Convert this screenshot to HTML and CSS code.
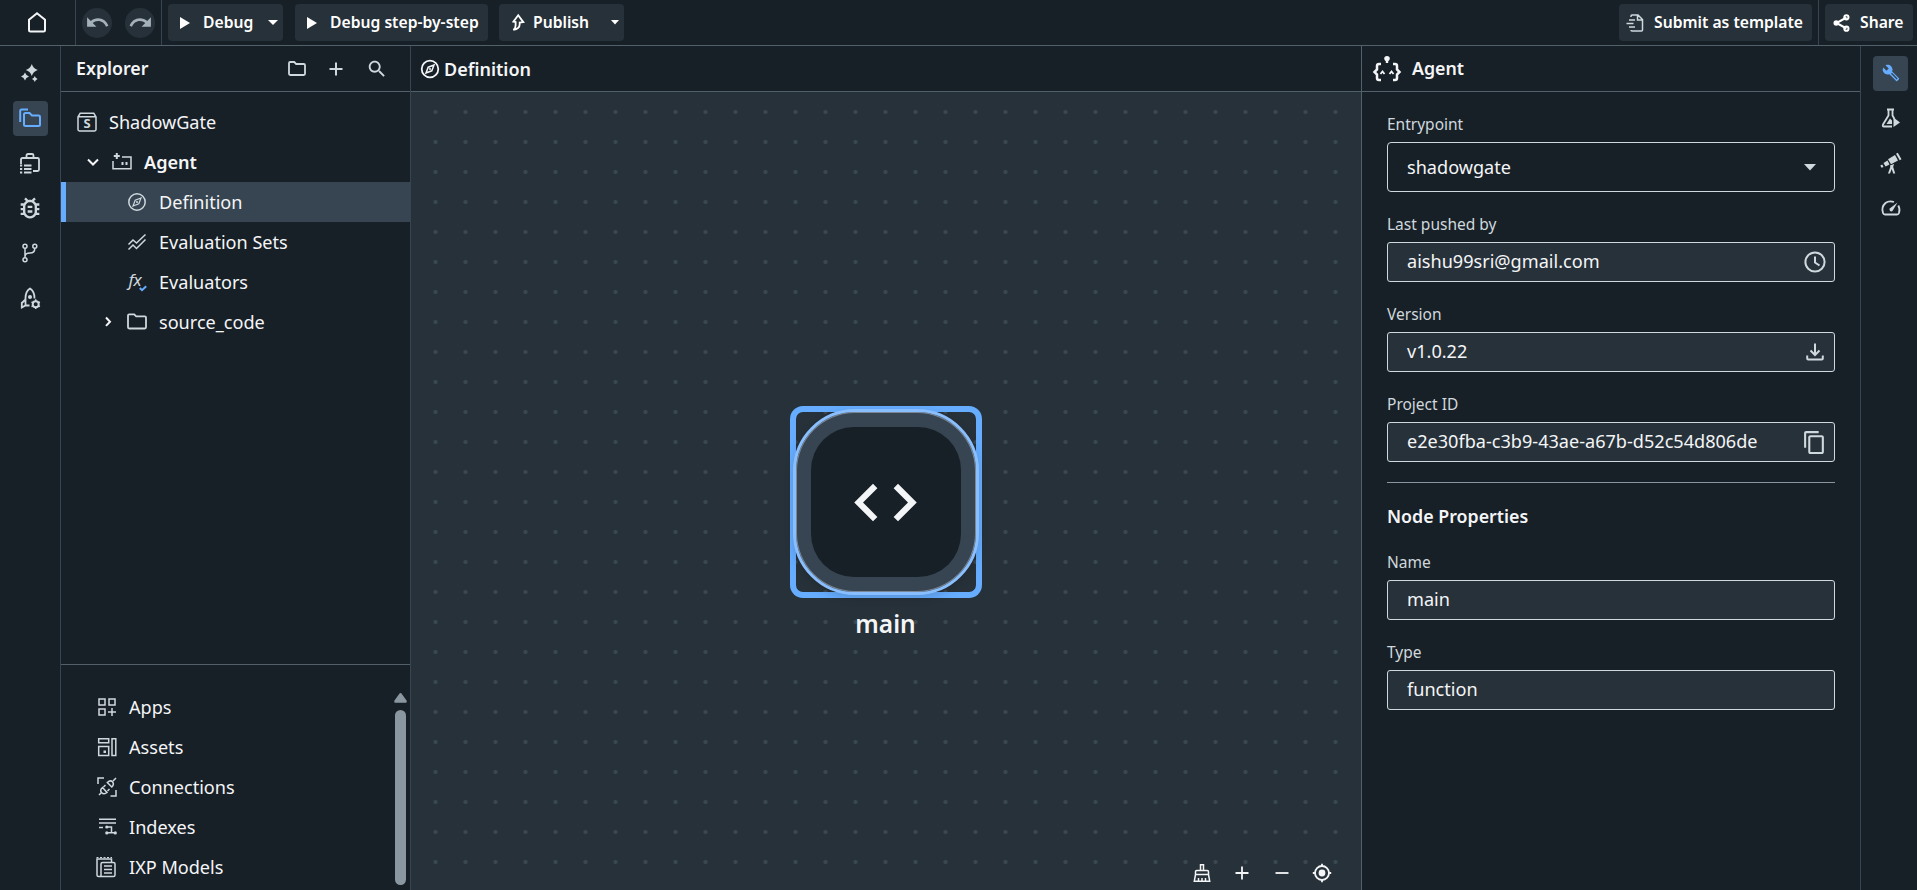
FILE: index.html
```html
<!DOCTYPE html>
<html lang="en">
<head>
    <meta charset="UTF-8">
    <meta name="viewport" content="width=device-width, initial-scale=1.0">
    <title>ShadowGate - Definition</title>
    <link rel="stylesheet" href="styles.css">
</head>
<body>
    <header class="topbar">
        <div class="home">
            <svg width="18" height="21" viewBox="0 0 18 21"><path d="M1 7.8 9 1.2l8 6.6v10.4q0 1.4-1.4 1.4H2.4Q1 19.6 1 18.2z" class="line w2"/></svg>
        </div>
        <div class="history">
            <button class="round"><svg width="25" height="25" viewBox="0 0 24 24"><path d="M12.5 8c-2.65 0-5.05.99-6.9 2.6L2 7v9h9l-3.62-3.62c1.39-1.16 3.16-1.88 5.12-1.88 3.54 0 6.55 2.31 7.6 5.5l2.37-.78C21.08 11.03 17.15 8 12.5 8z"/></svg></button>
            <button class="round"><svg width="25" height="25" viewBox="0 0 24 24"><path d="M18.4 10.6C16.55 8.99 14.15 8 11.5 8c-4.65 0-8.58 3.03-9.96 7.22L3.9 16c1.05-3.19 4.05-5.5 7.6-5.5 1.95 0 3.73.72 5.12 1.88L13 16h9V7l-3.6 3.6z"/></svg></button>
        </div>
        <div class="actions">
            <button class="btn debug">
                <svg width="10" height="12" viewBox="0 0 10 12"><path d="M0 0l10 6-10 6z"/></svg>
                <span>Debug</span>
                <svg class="caret" width="10" height="5" viewBox="0 0 10 5"><path d="M0 0h10L5 5z"/></svg>
            </button>
            <button class="btn step">
                <svg width="10" height="12" viewBox="0 0 10 12"><path d="M0 0l10 6-10 6z"/></svg>
                <span>Debug step-by-step</span>
            </button>
            <button class="btn publish">
                <svg width="13" height="17" viewBox="0 0 13 17"><path d="M6.2 1.3 1.4 7.6l2.2.4v3.4c0 2-.8 3.4-2.2 4.4 4-.5 6.3-2.3 6.3-5.8V8.500l3.600-.4z" class="line w18"/></svg>
                <span>Publish</span>
                <svg class="caret" width="8" height="5" viewBox="0 0 8 5"><path d="M0 0h8L4 4.500z"/></svg>
            </button>
        </div>
        <div class="submit-box">
            <button class="btn submit">
                <svg class="soft" width="18" height="18" viewBox="0 0 18 18"><path d="M5 3V2q0-1 1-1h6l4.500 4.500V16q0 1-1 1H6q-1 0-1-1M11.500 1.500V6H16M3 6h6M0.500 9.500h7M3 13h6" class="line w15"/></svg>
                <span>Submit as template</span>
            </button>
        </div>
        <div class="share-box">
            <button class="btn share">
                <svg width="17" height="18" viewBox="0 0 17 18"><path d="M13.500 3.500 3.500 9l10 5.500" class="line w2"/><circle cx="3.200" cy="9" r="2.700"/><circle cx="13.400" cy="3.300" r="2.100" class="line w2"/><circle cx="13.400" cy="14.700" r="2.100" class="line w2"/></svg>
                <span>Share</span>
            </button>
        </div>
    </header>

    <div class="workspace">
        <nav class="rail left-rail">
            <div class="rail-item"><svg width="20" height="20" viewBox="0 0 20 20"><path d="M11.800 1q1.300 4.300 6 6-4.700 1.700-6 6-1.300-4.300-6-6 4.700-1.700 6-6zM5 9.500q.8 2.800 4 4-3.200 1.200-4 4-.8-2.800-4-4 3.200-1.200 4-4zM14.800 13q.5 2 2.800 3-2.300 1-2.800 3-.5-2-2.800-3 2.300-1 2.800-3z"/></svg></div>
            <div class="rail-item active"><svg width="22" height="20" viewBox="0 0 22 20"><path d="M1.200 14V3q0-1.500 1.500-1.500H9M5 6.500Q5 5 6.500 5h4l2.500 2.500h6.500Q21 7.500 21 9v7.500q0 1.500-1.500 1.500h-13Q5 18 5 16.500z" class="line w2"/></svg></div>
            <div class="rail-item"><svg width="22" height="22" viewBox="0 0 22 22"><path d="M2 12V7.500Q2 6 3.500 6h15Q20 6 20 7.500v10q0 1.500-1.500 1.500H14M7.500 6V3.500Q7.500 2 9 2h4q1.500 0 1.500 1.500V6" class="line w18"/><path d="M1 13.500h2.200M5 13.500h7.500M1 17h2.200M5 17h7.500M1 20.500h2.200M5 20.500h7.500" class="line w18"/></svg></div>
            <div class="rail-item"><svg width="28" height="28" viewBox="0 0 24 24"><path d="M20 8h-2.810c-.45-.78-1.070-1.450-1.820-1.960L17 4.410 15.590 3l-2.170 2.170C12.960 5.060 12.490 5 12 5s-.96.06-1.410.17L8.410 3 7 4.410l1.620 1.630C7.880 6.550 7.260 7.220 6.810 8H4v2h2.090c-.05.33-.09.66-.09 1v1H4v2h2v1c0 .34.04.67.09 1H4v2h2.810c1.040 1.790 2.970 3 5.190 3s4.150-1.210 5.190-3H20v-2h-2.090c.05-.33.09-.66.09-1v-1h2v-2h-2v-1c0-.34-.04-.67-.09-1H20V8zm-4 4v3c0 .22-.03.47-.07.7l-.1.65-.37.65c-.72 1.240-2.040 2-3.460 2s-2.740-.77-3.460-2l-.37-.64-.1-.65C8.030 15.480 8 15.230 8 15v-4c0-.23.03-.48.07-.7l.1-.65.37-.65c.3-.52.72-.97 1.210-1.310l.57-.39.74-.18c.31-.08.63-.12.94-.12.32 0 .63.04.95.12l.68.16.61.42c.5.34.91.78 1.210 1.310l.38.65.1.65c.04.22.07.47.07.69v1zm-6 2h4v2h-4zm0-4h4v2h-4z"/></svg></div>
            <div class="rail-item"><svg width="16" height="20" viewBox="0 0 16 20"><circle cx="3" cy="3.200" r="2" class="line w15"/><circle cx="12.800" cy="3.200" r="2" class="line w15"/><circle cx="3" cy="16.800" r="2" class="line w15"/><path d="M3 5.200v9.600M12.800 5.200q0 4.800-4.800 4.800-5 0-5 3.500" class="line w15"/></svg></div>
            <div class="rail-item"><svg width="20" height="22" viewBox="0 0 20 22"><path d="M5.500 18.500V11Q5.500 4.500 10 1.500q4.500 3 4.500 9.500v.5M5.500 12.500 1.800 16v4.500l3.700-2h4" class="line w18"/><circle cx="10" cy="10" r="2"/><circle cx="15.700" cy="17.200" r="3" class="line w2"/><path d="M15.700 12.300v2M15.700 20v2M11.500 14.800l1.700 1M18.200 18.600l1.700 1M11.500 19.600l1.700-1M18.200 15.800l1.700-1" class="line w15"/></svg></div>
        </nav>

        <aside class="explorer">
            <div class="pane-head">
                <h2>Explorer</h2>
                <svg width="18" height="15" viewBox="0 0 18 15"><path d="M1 2.200Q1 1 2.200 1h4l2 2h7.600Q17 3 17 4.200v8.600q0 1.200-1.200 1.200H2.200Q1 14 1 12.800z" class="line w18"/></svg>
                <svg width="14" height="14" viewBox="0 0 14 14"><path d="M7 .5v13M.5 7h13" class="line w2"/></svg>
                <svg width="22" height="22" viewBox="0 0 24 24"><path d="M15.500 14h-.79l-.28-.27C15.410 12.590 16 11.110 16 9.500 16 5.910 13.090 3 9.500 3S3 5.910 3 9.500 5.910 16 9.500 16c1.610 0 3.090-.59 4.230-1.570l.27.28v.79l5 4.990L20.490 19l-4.990-5zm-6 0C7.010 14 5 11.990 5 9.500S7.010 5 9.500 5 14 7.010 14 9.500 11.990 14 9.500 14z"/></svg>
            </div>

            <ul class="tree">
                <li class="level-0">
                    <svg class="ico" viewBox="0 0 20 20"><path d="M1 5 3.200 1.200h13.600L19 5v12.600Q19 19 17.600 19H2.400Q1 19 1 17.600zM1 4.800h18" class="line w15"/><text x="10" y="16.300" class="ico-s">S</text></svg>
                    <span>ShadowGate</span>
                </li>
                <li class="level-1 bold">
                    <svg class="chevron" viewBox="0 0 20 20"><path d="M5 7.500l5 5 5-5" class="line w2"/></svg>
                    <svg class="ico" viewBox="0 0 20 20"><path d="M1 9v7.800h18V5h-9" class="line w15"/><path d="M4.800 1v6M1.800 4h6M10.500 10v3M14.500 10v3" class="line w2"/></svg>
                    <span>Agent</span>
                </li>
                <li class="level-2 selected">
                    <svg class="ico" viewBox="0 0 20 20"><circle cx="10" cy="10" r="8.200" class="line w15"/><path d="M14 6 11.800 11.800 6 14 8.200 8.200z" class="line w12"/><circle cx="10" cy="10" r="1"/></svg>
                    <span>Definition</span>
                </li>
                <li class="level-2">
                    <svg class="ico" viewBox="0 0 20 20"><path d="M1.500 12.500 6 8l3.500 3 9-8.500M1.500 17.500 6 13l3.500 3.500 9-9" class="line w15"/></svg>
                    <span>Evaluation Sets</span>
                </li>
                <li class="level-2">
                    <svg class="ico" viewBox="0 0 20 20"><text x="1.500" y="13.500" class="ico-fx">fx</text><path d="M12.800 16l2.200 2.200 4.200-4" class="line w2 accent"/></svg>
                    <span>Evaluators</span>
                </li>
                <li class="level-2 branch">
                    <svg class="chevron" viewBox="0 0 20 20"><path d="M8 5.500l4 4.200-4 4.200" class="line w2"/></svg>
                    <svg class="ico" viewBox="0 0 20 20"><path d="M1 3.500Q1 2.300 2.200 2.300h5l2 2h8.600Q19 4.300 19 5.500v9.800q0 1.200-1.200 1.200H2.200Q1 16.500 1 15.300z" class="line w18"/></svg>
                    <span>source_code</span>
                </li>
            </ul>

            <div class="resources">
                <ul>
                    <li>
                        <svg class="ico" viewBox="0 0 20 20"><path d="M2 2h6v6H2zM12 2h6v6h-6zM2 12h6v6H2zM15 11v8M11 15h8" class="line w15"/></svg>
                        <span>Apps</span>
                    </li>
                    <li>
                        <svg class="ico" viewBox="0 0 20 20"><path d="M1.700 1.700h10v4h-10zM1.700 9.500h10v9h-10zM15 1.700h3.800v16.800H15z" class="line w15"/><path d="M6.500 13.500H9V16H6.500z"/></svg>
                        <span>Assets</span>
                    </li>
                    <li>
                        <svg class="ico" viewBox="0 0 20 20"><path d="M1 7V1h6M13.500 19H19v-6M2 18l2.500-2.500M16 4l3-3M4.500 15.500q-2-2.500 1-5l4.500 5q-3 2.500-5.500 0zM6.500 10l2-2M10.500 14l2-2M10.300 5.500q3-2.800 5.200-.8 2 2.500-.7 5.300z" class="line w15"/></svg>
                        <span>Connections</span>
                    </li>
                    <li>
                        <svg class="ico" viewBox="0 0 20 20"><path d="M2 2.200h17M2 6h17M2 10.500h4M10 10h4.500v5.800M9 15.800h10" class="line w15"/><circle cx="9.800" cy="10" r="1.600"/><circle cx="9.800" cy="15.900" r="1.600"/><circle cx="18.300" cy="15.900" r="1.600"/></svg>
                        <span>Indexes</span>
                    </li>
                    <li>
                        <svg class="ico nudge" viewBox="0 0 20 22"><path d="M5 20.500H2.500Q1 20.500 1 19V3h14.500v3M5 8q0-1.500 1.500-1.500h11Q19 6.500 19 8v11q0 1.500-1.500 1.500H5z" class="line w15"/><path d="M.5 1.500h15.500" class="line w12 dash"/><path d="M8 10h8M8 13.500h8M8 17h8" class="line w15"/></svg>
                        <span>IXP Models</span>
                    </li>
                </ul>
                <div class="scrollbar">
                    <svg width="13" height="10" viewBox="0 0 13 10"><path d="M5.300.8q1.200-1.400 2.400 0l4.800 6.700q.8 2.300-1.200 2.300H1.700Q-.3 9.800.5 7.500z"/></svg>
                    <div class="thumb"></div>
                </div>
            </div>
        </aside>

        <main class="editor">
            <div class="pane-head">
                <svg width="20" height="20" viewBox="0 0 20 20"><circle cx="10" cy="10" r="8.300" class="line w18"/><path d="M14 6 11.800 11.800 6 14 8.200 8.200z" class="line w15"/><circle cx="10" cy="10" r="1"/></svg>
                <h2>Definition</h2>
            </div>
            <div class="canvas">
                <div class="node">
                    <div class="node-frame">
                        <div class="node-ring">
                            <div class="node-core">
                                <svg width="75" height="75" viewBox="0 0 24 24"><path d="M9.400 16.600L4.800 12l4.600-4.600L8 6l-6 6 6 6 1.400-1.400zm5.200 0l4.600-4.600-4.600-4.600L16 6l6 6-6 6-1.400-1.400z"/></svg>
                            </div>
                        </div>
                    </div>
                    <p class="node-name">main</p>
                </div>
                <div class="canvas-tools">
                    <svg width="20" height="20" viewBox="0 0 20 20"><path d="M8.500 7.500V1.800h3v5.700M3.500 11.500V8.800q0-1.200 1.200-1.200h10.600q1.200 0 1.200 1.200v2.700zM3.500 11.500 2.300 18.200h15.400l-1.200-6.700M6.500 18v-3M10 18v-3M13.500 18v-3" class="line w15"/></svg>
                    <svg width="20" height="20" viewBox="0 0 20 20"><path d="M10 3.500v13M3.500 10h13" class="line w18"/></svg>
                    <svg width="20" height="20" viewBox="0 0 20 20"><path d="M3.500 10h13" class="line w18"/></svg>
                    <svg width="20" height="20" viewBox="0 0 20 20"><circle cx="10" cy="10" r="7" class="line w18"/><circle cx="10" cy="10" r="3.400"/><path d="M10 .8v3M10 16.200v3M.8 10h3M16.200 10h3" class="line w18"/></svg>
                </div>
            </div>
        </main>

        <aside class="panel">
            <div class="pane-head">
                <svg width="28" height="26" viewBox="0 0 28 26"><path d="M8 8H6Q4 8 4 10v3.500L1.500 16 4 18.500V22q0 2 2 2h2M20 8h2q2 0 2 2v3.500l2.500 2.500-2.500 2.500V22q0 2-2 2h-2" class="line w25"/><path d="M7.500 18 9.500 15.500l2 2.500M16.500 18l2-2.500 2 2.500" class="line w18"/><path d="M14 0q2.800 0 2.800 2.800 0 1.500-1.600 2.400V7h-2.400V5.200q-1.600-.9-1.600-2.400Q11.200 0 14 0z"/></svg>
                <h2>Agent</h2>
            </div>
            <div class="panel-body">
                <label>Entrypoint</label>
                <div class="field select">
                    <span>shadowgate</span>
                    <svg width="12" height="7" viewBox="0 0 12 7"><path d="M0 0h12L6 6.500z"/></svg>
                </div>
                <label>Last pushed by</label>
                <div class="field">
                    <span>aishu99sri@gmail.com</span>
                    <svg width="24" height="24" viewBox="0 0 24 24"><circle cx="12" cy="12" r="9.600" class="line w2"/><path d="M12 6.500V12.500l4.500 3" class="line w2"/></svg>
                </div>
                <label>Version</label>
                <div class="field">
                    <span>v1.0.22</span>
                    <svg width="24" height="24" viewBox="0 0 24 24"><path d="M4.200 15.500v3q0 1 1 1h13.600q1 0 1-1v-3M12 3.500v11M7.500 10.500l4.500 4.500 4.500-4.500" class="line w2"/></svg>
                </div>
                <label>Project ID</label>
                <div class="field">
                    <span>e2e30fba-c3b9-43ae-a67b-d52c54d806de</span>
                    <svg width="25" height="25" viewBox="0 0 24 24"><path d="M16 1H4c-1.100 0-2 .9-2 2v14h2V3h12V1zm3 4H8c-1.100 0-2 .9-2 2v14c0 1.100.9 2 2 2h11c1.100 0 2-.9 2-2V7c0-1.100-.9-2-2-2zm0 16H8V7h11v14z"/></svg>
                </div>
                <hr>
                <h3>Node Properties</h3>
                <label>Name</label>
                <div class="field"><span>main</span></div>
                <label>Type</label>
                <div class="field"><span>function</span></div>
            </div>
        </aside>

        <nav class="rail right-rail">
            <div class="rail-item active"><svg width="18" height="18" viewBox="0 0 24 24"><path fill-rule="evenodd" d="M22.700 19l-9.100-9.100c.9-2.300.4-5-1.500-6.900-2-2-5-2.400-7.400-1.300L9 6 6 9 1.600 4.700C.4 7.100.9 10.100 2.900 12.100c1.900 1.900 4.600 2.400 6.900 1.500l9.100 9.100c.4.4 1 .4 1.400 0l2.300-2.300c.5-.4.5-1.100.1-1.400zM19.500 20.500 12 13l1.300-1.300 7.500 7.500z"/></svg></div>
            <div class="rail-item"><svg width="20" height="20" viewBox="0 0 20 20"><path d="M6 1.500h7M7.500 1.500v6L2 16.500Q1.200 18.500 3 18.500h8M11.500 1.500v6l2 3.500" class="line w18"/><path d="M9 10.500 5.500 16H11v-3.500zM12.500 9.500l6.500 5-6.500 4.500z"/></svg></div>
            <div class="rail-item"><svg width="22" height="22" viewBox="0 0 22 22"><path d="M16 1.800l1.800-1 3.700 6.500-1.800 1zM8 7.200 15 3l3 5.400-7 3.900zM3.500 11l4-2.500 2 4-4 2zM.3 13.500l2-1 1.200 2.400-2 .8zM10 13.500l4-1.500-.8 3 2 6.500h-2l-1.500-4.500L10 21.500H8l2.300-6.500z"/></svg></div>
            <div class="rail-item"><svg width="20" height="16" viewBox="0 0 20 16"><path d="M13 2Q8 .3 4.500 3 0 7 2 13q.5 1.500 2 1.500h12q1.500 0 2-1.500 1.300-4-.7-7.500" class="line w18"/><path d="M16.500 2.500 11.800 10.500q-1.200 1.500-2.700.5-1.300-1.300 0-2.800z"/></svg></div>
        </nav>
    </div>
</body>
</html>
```

FILE: styles.css
```css
* {
    box-sizing: border-box;
}

body {
    margin: 0;
    height: 100vh;
    display: flex;
    flex-direction: column;
    overflow: hidden;
    background-color: #182027;
    color: #f4f5f7;
    font-family: "Noto Sans", sans-serif;
    font-size: 18.1px;
}

h2, h3, p, ul {
    margin: 0;
    padding: 0;
}

ul {
    list-style: none;
}

svg {
    display: block;
    flex: none;
    fill: currentColor;
    overflow: visible;
}

.line {
    fill: none;
    stroke: currentColor;
}

.w12 { stroke-width: 1.2; }
.w15 { stroke-width: 1.5; }
.w18 { stroke-width: 1.8; }
.w2 { stroke-width: 2; }
.w25 { stroke-width: 2.5; }
.accent { stroke: #66adff; }
.dash { stroke-dasharray: 2 1.5; }

/* Top bar */
.topbar {
    display: flex;
    height: 46px;
    flex: none;
    border-bottom: 1px solid #526069;
}

.home {
    width: 76px;
    padding: 12px 0 0 28px;
    border-right: 1px solid #374552;
}

.history {
    display: flex;
    align-items: center;
    gap: 13px;
    width: 86px;
    padding-left: 6px;
    border-right: 1px solid #374552;
}

.round {
    display: flex;
    align-items: center;
    justify-content: center;
    width: 30px;
    height: 30px;
    padding: 0;
    border: none;
    border-radius: 50%;
    background-color: #273139;
    color: #a4b1b8;
}

.actions {
    display: flex;
    flex: 1;
    padding: 4px 0 4px 6px;
}

.btn {
    display: flex;
    align-items: center;
    height: 37px;
    border: none;
    border-radius: 4px;
    background-color: #273139;
    color: #fff;
    font-family: inherit;
    font-size: 15.7px;
    font-weight: 600;
    white-space: nowrap;
}

.btn span {
    padding-bottom: 1px;
}

.debug {
    width: 115px;
    padding: 0 5px 0 12px;
    gap: 13px;
}

.step {
    width: 193px;
    margin-left: 12px;
    padding: 0 0 0 12px;
    gap: 13px;
}

.publish {
    width: 125px;
    margin-left: 11px;
    padding: 0 5px 0 13px;
    gap: 8px;
}

.caret {
    margin-left: auto;
}

.submit-box {
    padding: 4px 6px 0 0;
    border-right: 1px solid #374552;
}

.submit {
    width: 193px;
    padding: 0 0 0 7px;
    gap: 10px;
}

.share-box {
    padding: 4px 4px 0 6px;
}

.share {
    width: 88px;
    padding: 0 0 0 8px;
    gap: 10px;
}

.soft {
    color: #cfd8dd;
}

/* Workspace */
.workspace {
    display: flex;
    flex: 1;
    min-height: 0;
}

.pane-head {
    display: flex;
    align-items: center;
    height: 46px;
    flex: none;
    border-bottom: 1px solid #526069;
}

.pane-head h2 {
    font-size: 17.8px;
    font-weight: 600;
}

.rail {
    display: flex;
    flex-direction: column;
    align-items: center;
    gap: 10px;
    color: #cfd8dd;
}

.left-rail {
    width: 61px;
    padding-top: 10px;
    border-right: 1px solid #374552;
}

.right-rail {
    width: 57px;
    padding-top: 10px;
    padding-left: 3px;
    border-left: 1px solid #374552;
}

.rail-item {
    display: flex;
    align-items: center;
    justify-content: center;
    width: 35px;
    height: 35px;
    padding-bottom: 2px;
    border-radius: 4px;
}

.rail-item.active {
    background-color: #374552;
    color: #66adff;
}

/* Explorer */
.explorer {
    display: flex;
    flex-direction: column;
    width: 350px;
    border-right: 1px solid #374552;
}

.explorer .pane-head {
    padding: 0 22px 0 15px;
    color: #cfd8dd;
    gap: 23px;
}

.explorer h2 {
    margin-right: auto;
    padding-bottom: 1px;
    color: #f4f5f7;
}

.explorer li {
    display: flex;
    align-items: center;
    gap: 12px;
    height: 40px;
}

.ico {
    width: 20px;
    height: 20px;
    color: #cfd8dd;
}

.ico.nudge {
    width: 20px;
    height: 22px;
    margin: 0 1px 0 -1px;
}

.chevron {
    width: 20px;
    height: 20px;
    margin-right: -3px;
}

.ico-s {
    font-size: 13px;
    font-weight: 700;
    text-anchor: middle;
}

.ico-fx {
    font-size: 17px;
    font-style: italic;
    letter-spacing: -0.5px;
}

.tree {
    flex: 1;
    padding-top: 10px;
}

.tree .level-0 {
    padding-left: 16px;
}

.tree .level-1 {
    padding-left: 22px;
}

.tree .level-2 {
    padding-left: 66px;
}

.tree .branch {
    padding-left: 37px;
}

.tree .bold {
    font-weight: 600;
}

.tree .selected {
    padding-left: 61px;
    border-left: 5px solid #66adff;
    background-color: #374552;
}

.resources {
    display: flex;
    justify-content: space-between;
    height: 226px;
    border-top: 1px solid #526069;
}

.resources ul {
    padding: 22px 0 0 36px;
}

.scrollbar {
    display: flex;
    flex-direction: column;
    align-items: center;
    gap: 7px;
    width: 13px;
    margin-right: 3px;
    padding: 28px 0 5px;
    color: #8a97a0;
}

.thumb {
    flex: 1;
    width: 11px;
    border-radius: 6px;
    background-color: #8a97a0;
}

/* Canvas */
.editor {
    display: flex;
    flex-direction: column;
    flex: 1;
    min-width: 0;
}

.editor .pane-head {
    gap: 4px;
    padding-left: 9px;
}

.editor .pane-head h2 {
    font-size: 18px;
}

.canvas {
    position: relative;
    flex: 1;
    background-color: #273139;
    background-image: radial-gradient(circle, #3a4851 1.6px, transparent 2.4px);
    background-size: 30px 30px;
    background-position: 9.5px 5px;
}

.node {
    position: absolute;
    left: 378.5px;
    top: 314px;
    width: 192px;
}

.node-frame {
    height: 192px;
    padding: 3px;
    border-radius: 13px;
    box-shadow: inset 0 0 0 6px #66adff;
}

.node-ring {
    height: 186px;
    padding: 15px;
    border: 3px solid #8abfff;
    border-radius: 62px;
    background-color: #374552;
    box-shadow: inset 0 0 0 1px #7b8794, 0 3px 10px rgba(0, 0, 0, 0.15);
}

.node-core {
    display: flex;
    align-items: center;
    justify-content: center;
    height: 150px;
    border-radius: 43px;
    background-color: #182027;
}

.node-name {
    margin-top: 9px;
    font-size: 24.5px;
    font-weight: 600;
    line-height: 34px;
    text-align: center;
}

.canvas-tools {
    position: absolute;
    right: 29px;
    bottom: 7px;
    display: flex;
    gap: 20px;
}

/* Properties panel */
.panel {
    width: 499px;
    border-left: 1px solid #526069;
}

.panel .pane-head {
    gap: 11px;
    padding-left: 11px;
}

.panel .pane-head h2 {
    padding-bottom: 1px;
}

.panel-body {
    padding: 0 25px;
}

.panel label {
    display: block;
    padding: 22px 0 8px;
    color: #cfd8dd;
    font-size: 15.5px;
    line-height: 20px;
}

.field {
    display: flex;
    align-items: center;
    justify-content: space-between;
    height: 40px;
    padding: 0 7px 0 19px;
    border: 1px solid #cfd8dd;
    border-radius: 3px;
    background-color: #273139;
}

.field span {
    padding-bottom: 2px;
}

.field svg {
    color: #cfd8dd;
}

.field.select {
    height: 50px;
    padding-right: 18px;
    border-radius: 4px;
    background-color: transparent;
}

.field.select span {
    padding-bottom: 0;
}

.panel hr {
    height: 1px;
    margin: 20px 0 0;
    border: none;
    background-color: #8a97a0;
}

.panel h3 {
    padding-top: 20px;
    font-size: 17.8px;
    font-weight: 600;
    line-height: 27px;
}
```
